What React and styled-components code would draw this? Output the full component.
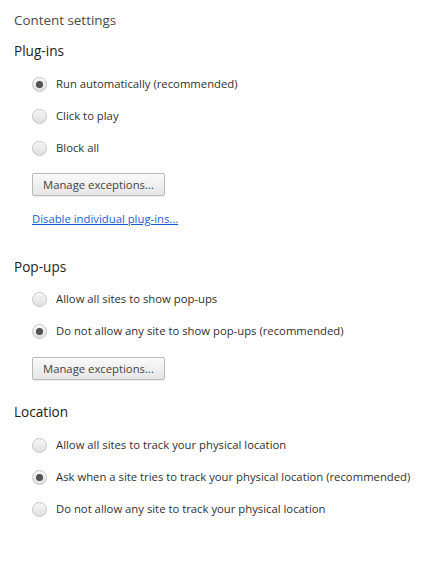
import styled, { createGlobalStyle } from "styled-components";

const GlobalStyle = createGlobalStyle`
  body {
    margin: 0;
    background: #ffffff;
    font-family: "Open Sans", "Noto Sans", sans-serif;
    font-size: 11.3px;
    color: #303030;
  }
`;

const Page = styled.div`
  padding: 10px 14px 0 14px;
`;

const Title = styled.h1`
  margin: 0;
  font-size: 13.4px;
  font-weight: normal;
  line-height: 20px;
  color: #4a4a4a;
`;

const Section = styled.section`
  margin-top: ${props => props.gap || 10}px;
`;

const Heading = styled.h2`
  margin: 0;
  font-size: 13.6px;
  font-weight: normal;
  line-height: 20px;
  color: #222;
`;

const Options = styled.div`
  margin-top: ${props => props.top || 6}px;
  padding-left: 18px;
  display: flex;
  flex-direction: column;
`;

const Row = styled.label`
  display: flex;
  align-items: center;
  gap: 9px;
  height: 32px;
  white-space: nowrap;
`;

const Dot = styled.span`
  width: 13px;
  height: 13px;
  border-radius: 50%;
  border: 1px solid #c4c4c4;
  background: linear-gradient(#f4f4f4, #e0e0e0);
  box-shadow: inset 0 1px 1px rgba(255, 255, 255, 0.8);
  display: flex;
  align-items: center;
  justify-content: center;
  flex-shrink: 0;

  &::after {
    content: "";
    width: 7px;
    height: 7px;
    border-radius: 50%;
    background: ${props => (props.checked ? "radial-gradient(#5a5a5a, #444)" : "transparent")};
  }
`;

const Text = styled.span`
  line-height: 16px;
`;

const Button = styled.button`
  margin-top: ${props => props.top || 9}px;
  height: 23px;
  padding: 0 10px;
  white-space: nowrap;
  font-family: inherit;
  font-size: 11.3px;
  color: #444;
  border: 1px solid #b8b8b8;
  border-radius: 2px;
  background: linear-gradient(#fafafa, #e6e6e6);
  box-shadow: 0 1px 0 rgba(0, 0, 0, 0.06);
`;

const Link = styled.a`
  display: block;
  margin-top: 13px;
  line-height: 20px;
  color: #1a5bd8;
  text-decoration: underline;
  cursor: pointer;
`;

const Indent = styled.div`
  padding-left: 18px;
`;

function Radio({ checked, children }) {
  return (
    <Row>
      <Dot checked={checked} />
      <Text>{children}</Text>
    </Row>
  );
}

export default function App() {
  return (
    <Page>
      <GlobalStyle />
      <Title>Content settings</Title>

      <Section gap={11}>
        <Heading>Plug-ins</Heading>
        <Options top={7}>
          <Radio checked>Run automatically (recommended)</Radio>
          <Radio>Click to play</Radio>
          <Radio>Block all</Radio>
        </Options>
        <Indent>
          <Button top={9}>Manage exceptions...</Button>
          <Link>Disable individual plug-ins...</Link>
        </Indent>
      </Section>

      <Section gap={28}>
        <Heading>Pop-ups</Heading>
        <Options top={6}>
          <Radio>Allow all sites to show pop-ups</Radio>
          <Radio checked>Do not allow any site to show pop-ups (recommended)</Radio>
        </Options>
        <Indent>
          <Button top={10}>Manage exceptions...</Button>
        </Indent>
      </Section>

      <Section gap={22}>
        <Heading>Location</Heading>
        <Options top={7}>
          <Radio>Allow all sites to track your physical location</Radio>
          <Radio checked>Ask when a site tries to track your physical location (recommended)</Radio>
          <Radio>Do not allow any site to track your physical location</Radio>
        </Options>
      </Section>
    </Page>
  );
}
